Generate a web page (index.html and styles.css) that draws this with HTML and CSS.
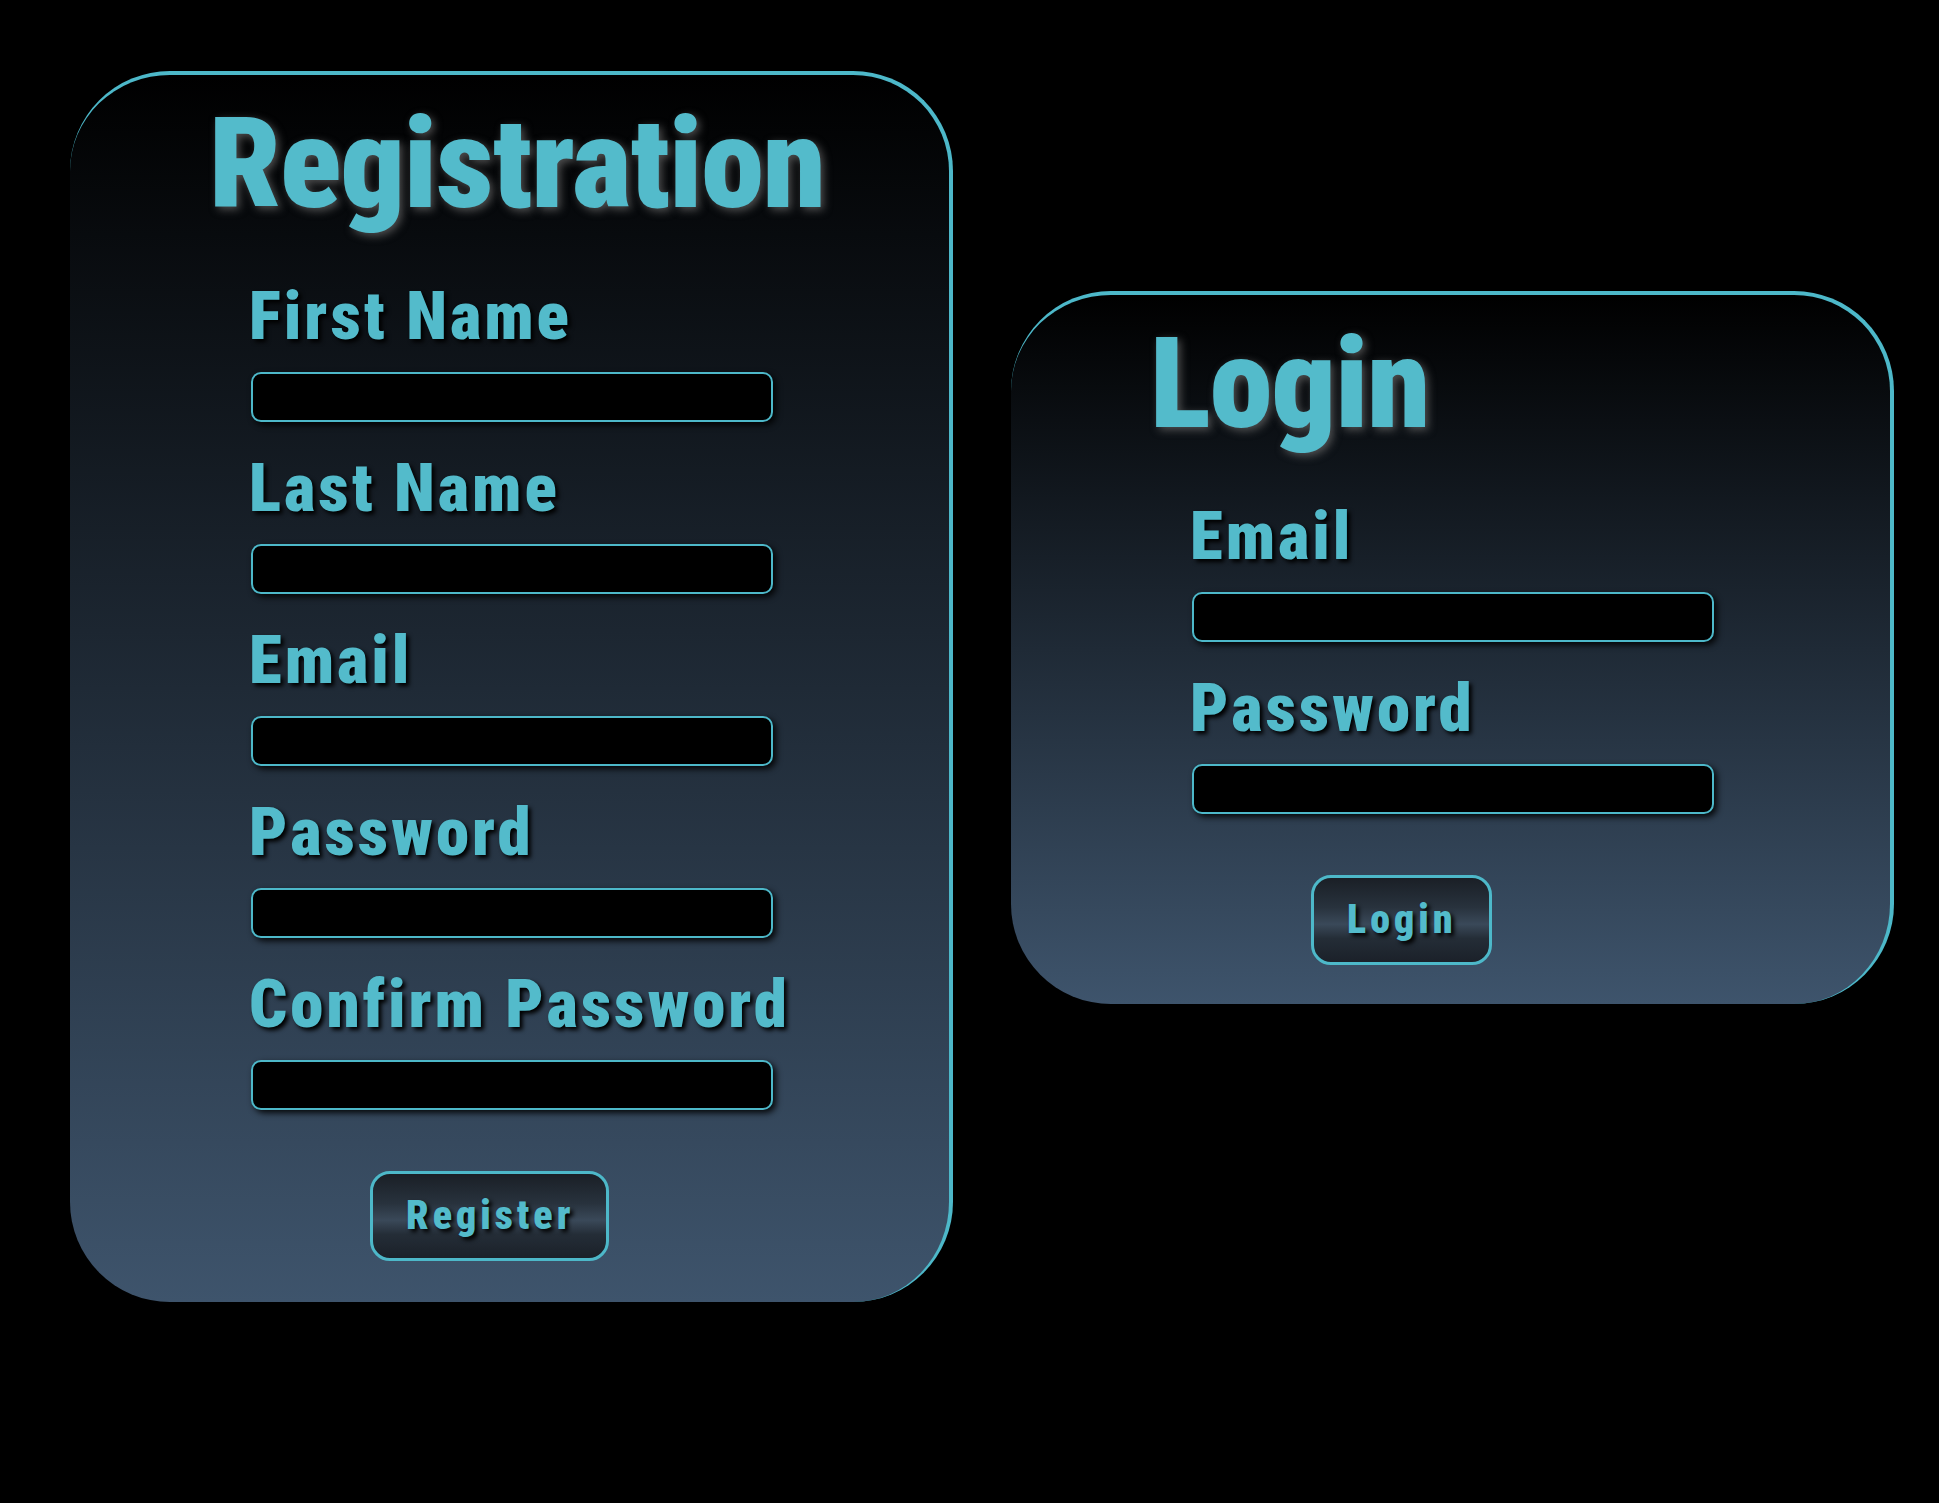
FILE: index.html
```html
<!DOCTYPE html>
<html lang="en">
<head>
<meta charset="utf-8">
<title>Registration &amp; Login</title>
<link rel="stylesheet" href="styles.css">
</head>
<body>
<main class="page">
  <section class="card card-register">
    <h1 class="card-title">Registration</h1>
    <form class="form">
      <label class="field-label" for="fn">First Name</label>
      <input class="field-input" id="fn" type="text">
      <label class="field-label" for="ln">Last Name</label>
      <input class="field-input" id="ln" type="text">
      <label class="field-label" for="em">Email</label>
      <input class="field-input" id="em" type="email">
      <label class="field-label" for="pw">Password</label>
      <input class="field-input" id="pw" type="password">
      <label class="field-label" for="cpw">Confirm Password</label>
      <input class="field-input" id="cpw" type="password">
      <button class="btn" type="button">Register</button>
    </form>
  </section>
  <section class="card card-login">
    <h1 class="card-title">Login</h1>
    <form class="form">
      <label class="field-label" for="lem">Email</label>
      <input class="field-input" id="lem" type="email">
      <label class="field-label" for="lpw">Password</label>
      <input class="field-input" id="lpw" type="password">
      <button class="btn" type="button">Login</button>
    </form>
  </section>
</main>
</body>
</html>
```
FILE: styles.css
```css
html, body {
  margin: 0;
  padding: 0;
  background: #000;
}
body {
  font-family: "Roboto", "Liberation Sans Narrow", sans-serif;
  font-weight: 900;
  font-stretch: 75%;
  color: #53bbcb;
  min-height: 1503px;
}
.page {
  display: flex;
  align-items: flex-start;
  gap: 58px;
  padding: 71px 0 0 70px;
}
.card {
  box-sizing: border-box;
  width: 883px;
  border-top: 4px solid #4db8c9;
  border-right: 4px solid #4db8c9;
  border-radius: 100px;
  background: linear-gradient(to bottom, #000 0%, #3e546c 100%);
  padding: 25px 0 0 0;
}
.card-register {
  height: 1231px;
}
.card-login {
  height: 713px;
  margin-top: 220px;
}
.card-title {
  margin: 0 0 56px 0;
  padding-left: 139px;
  font-size: 127px;
  line-height: 1;
  font-weight: 900;
  letter-spacing: -1px;
  text-shadow: 3px 3px 8px rgba(110, 110, 110, 0.7);
}
.form {
  display: flex;
  flex-direction: column;
  align-items: flex-start;
  padding-left: 181px;
}
.field-label {
  display: block;
  margin-left: -2px;
  font-size: 67px;
  line-height: 1;
  letter-spacing: 3px;
  text-shadow: 3px 3px 4px #000;
}
.field-input {
  box-sizing: border-box;
  width: 522px;
  height: 50px;
  margin: 22px 0 33px 0;
  background: #000;
  border: 2px solid #4db8c9;
  border-radius: 10px;
  box-shadow: 3px 3px 6px rgba(0, 0, 0, 0.9);
  outline: none;
  color: #53bbcb;
}
.btn {
  box-sizing: border-box;
  height: 90px;
  margin: 28px 0 0 119px;
  padding: 0 32px 0 33px;
  border: 3px solid #4db8c9;
  border-radius: 20px;
  background: linear-gradient(to bottom, #1a1f26 0%, #28323d 35%, #3a4959 55%, #242d37 72%, #1b2129 100%);
  font-family: inherit;
  font-weight: 900;
  font-stretch: 75%;
  font-size: 40px;
  line-height: 1;
  letter-spacing: 4px;
  color: #53bbcb;
  text-shadow: 3px 3px 4px #000;
  display: flex;
  align-items: center;
}
```
